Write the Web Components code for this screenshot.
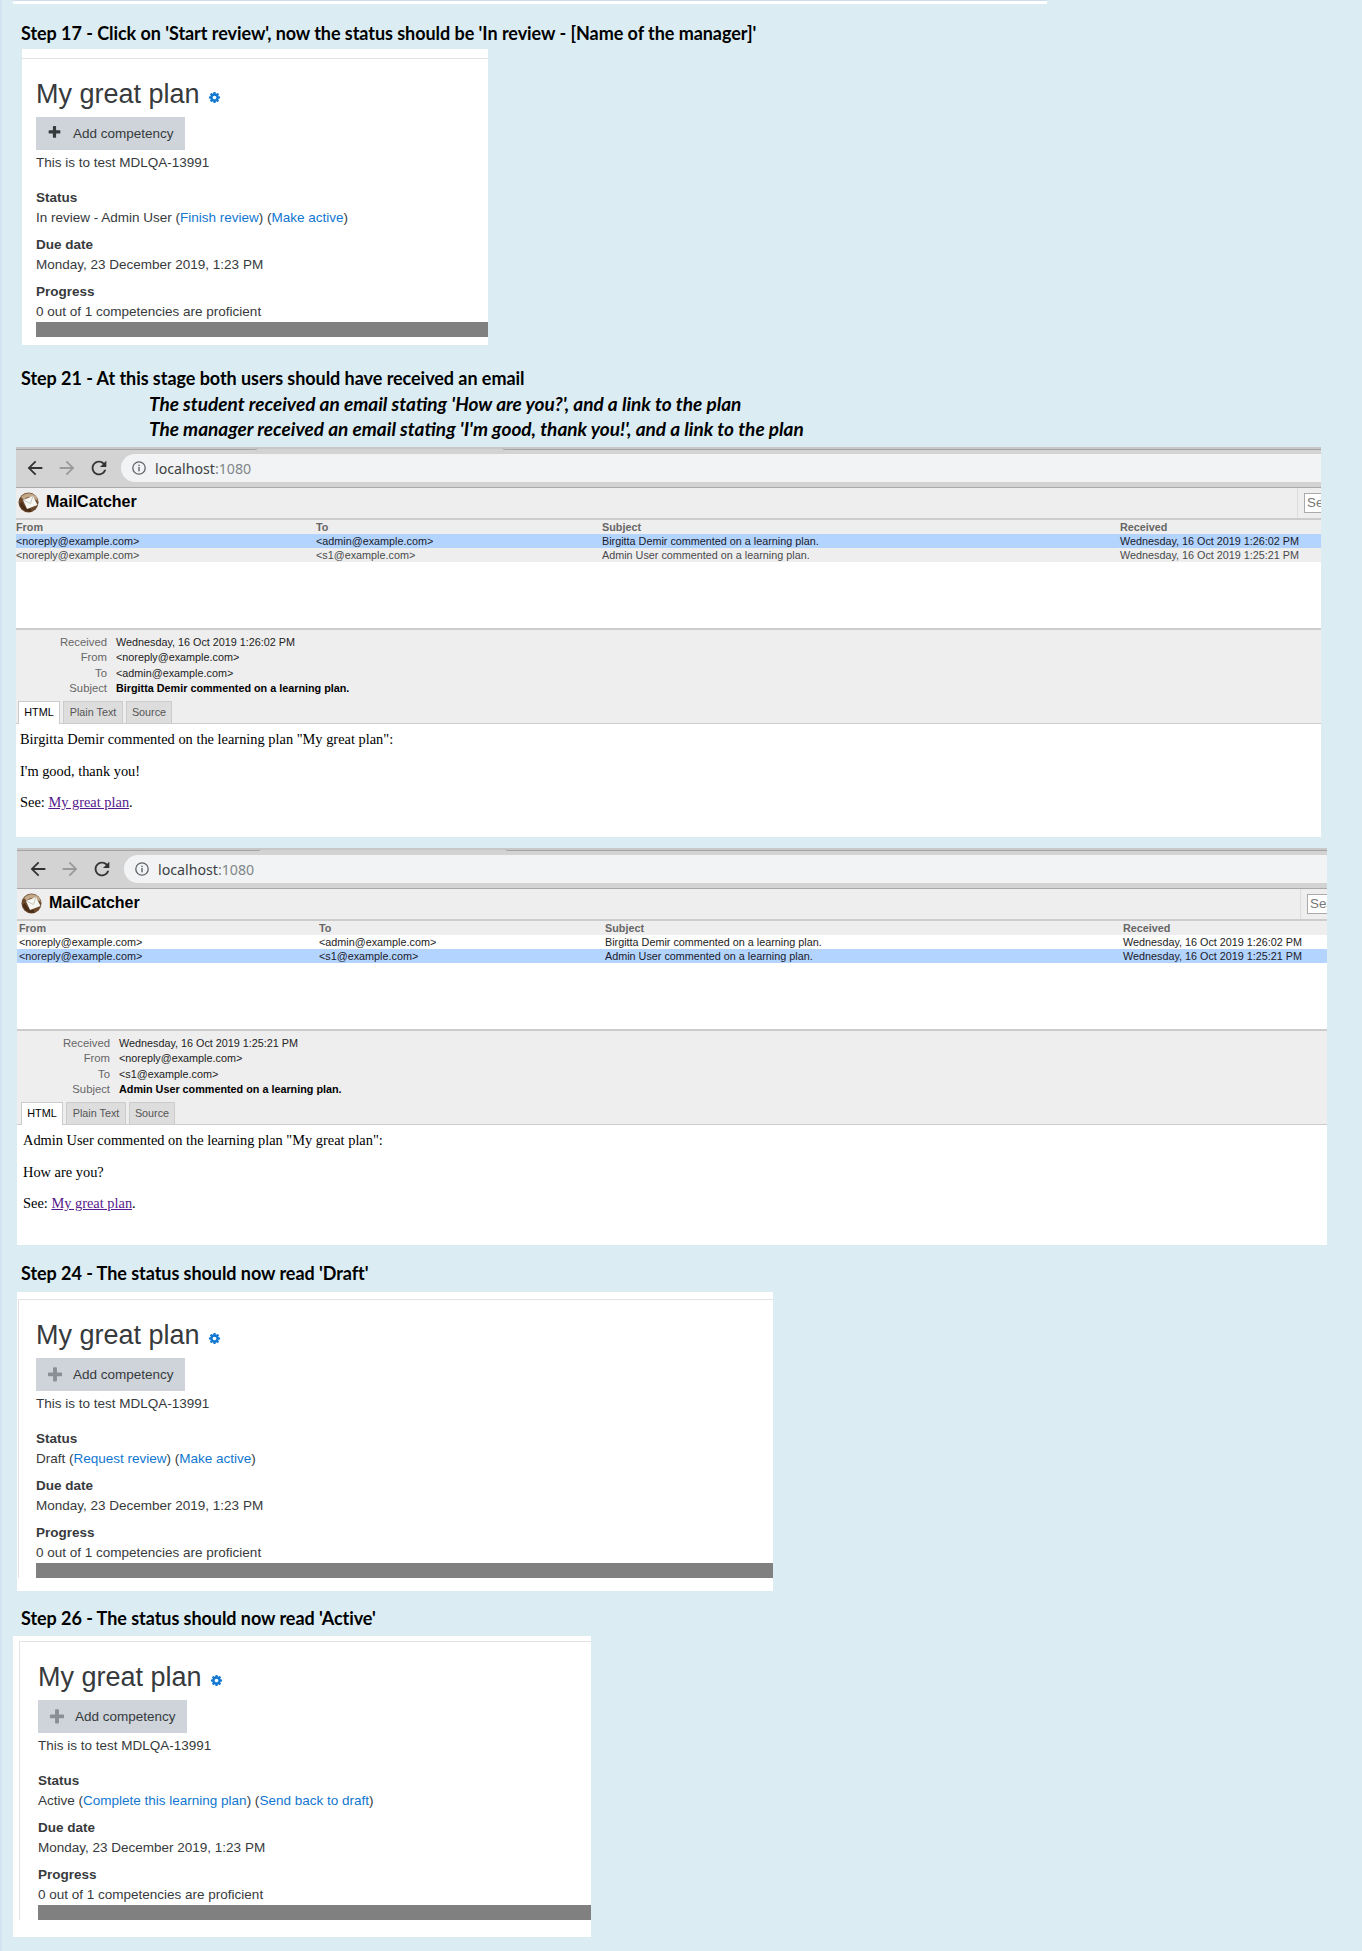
<!DOCTYPE html>
<html lang="en">
<head>
<meta charset="utf-8">
<title>MDLQA-13991</title>
<style>
  html, body { margin: 0; padding: 0; }
  body {
    background: #dbedf3;
    border-left: 2px solid #d5e3f0;
    height: 1951px;
    box-sizing: border-box;
    overflow: hidden;
    font-family: "Liberation Sans", Arial, sans-serif;
  }
  .strip {
    height: 3px;
    width: 1034px;
    margin-left: 11px;
    background: #fff;
    border-top: 1px solid #cfdcec;
  }
</style>
</head>
<body>
<div class="strip"></div>

<step-heading style="margin-top:18px">Step 17 - Click on 'Start review', now the status should be 'In review - [Name of the manager]'</step-heading>
<plan-card style="margin:2px 0 0 20px;width:466px" top="9" inset="14" bottom="8" plus="dark">
  In review - Admin User (<a href="#">Finish review</a>) (<a href="#">Make active</a>)
</plan-card>

<step-heading style="margin-top:22px">Step 21 - At this stage both users should have received an email</step-heading>
<step-heading note>The student received an email stating 'How are you?', and a link to the plan</step-heading>
<step-heading note>The manager received an email stating 'I'm good, thank you!', and a link to the plan</step-heading>

<mail-window style="margin:5px 0 0 14px;width:1305px;height:390px" selected="0" pad="0" search="Se" nav="24"
  received="Wednesday, 16 Oct 2019 1:26:02 PM" to="&lt;admin@example.com&gt;" subject="Birgitta Demir commented on a learning plan.">
  <p>Birgitta Demir commented on the learning plan "My great plan":</p>
  <p>I'm good, thank you!</p>
  <p>See: <a href="#">My great plan</a>.</p>
</mail-window>

<mail-window style="margin:11px 0 0 15px;width:1310px;height:397px" selected="1" pad="2" search="Sea" nav="27"
  received="Wednesday, 16 Oct 2019 1:25:21 PM" to="&lt;s1@example.com&gt;" subject="Admin User commented on a learning plan.">
  <p>Admin User commented on the learning plan "My great plan":</p>
  <p>How are you?</p>
  <p>See: <a href="#">My great plan</a>.</p>
</mail-window>

<step-heading style="margin-top:17px">Step 24 - The status should now read 'Draft'</step-heading>
<plan-card style="margin:5px 0 0 15px;width:756px" top="7" inset="19" edge="1" bottom="13">
  Draft (<a href="#">Request review</a>) (<a href="#">Make active</a>)
</plan-card>

<step-heading style="margin-top:16px">Step 26 - The status should now read 'Active'</step-heading>
<plan-card style="margin:4px 0 0 11px;width:578px" top="5" inset="25" edge="6" bottom="17">
  Active (<a href="#">Complete this learning plan</a>) (<a href="#">Send back to draft</a>)
</plan-card>

<script>
// Section titles of the test script, the "note" ones are the indented italic lines
class StepHeading extends HTMLElement {
    constructor() {
        super();
        this.attachShadow({ mode: 'open' });
        this.shadowRoot.innerHTML = `
            <style>
                :host {
                    display: block;
                    height: 25px;
                    line-height: 23px;
                    padding-left: 19px;
                    font-family: "Lato", "Open Sans", sans-serif;
                    font-weight: 700;
                    font-size: 18px;
                    letter-spacing: -0.05px;
                    color: #000;
                    white-space: nowrap;
                }
                :host([note]) {
                    padding-left: 147px;
                    font-style: italic;
                    font-size: 19px;
                    letter-spacing: 0;
                }
            </style>
            <slot></slot>
        `;
    }
}

// Moodle learning plan block
class PlanCard extends HTMLElement {
    constructor() {
        super();
        this.attachShadow({ mode: 'open' });
    }

    connectedCallback() {
        const top = this.getAttribute('top') || 9;
        const inset = Number(this.getAttribute('inset') || 14);
        const edge = this.getAttribute('edge');
        const bottom = this.getAttribute('bottom') || 8;
        const dark = this.getAttribute('plus') === 'dark';
        const plusColor = dark ? '#373a3c' : '#8a8f94';
        const plusSize = dark ? 15 : 18;
        const frameLeft = edge ? Number(edge) : 0;
        const contentLeft = edge ? inset - frameLeft - 1 : inset;

        this.shadowRoot.innerHTML = `
            <style>
                :host {
                    display: block;
                    background: #fff;
                    box-sizing: border-box;
                    padding-top: ${top}px;
                    padding-bottom: ${bottom}px;
                    font-family: "Liberation Sans", Arial, sans-serif;
                    font-size: 13.5px;
                    line-height: 20px;
                    color: #373a3c;
                }
                .frame {
                    margin-left: ${frameLeft}px;
                    padding-left: ${contentLeft}px;
                    border-top: 1px solid #e3e3e3;
                    ${edge ? 'border-left: 1px solid #e3e3e3;' : ''}
                }
                h2 {
                    margin: 16px 0 0;
                    font-size: 27px;
                    line-height: 38px;
                    font-weight: 400;
                    display: flex;
                    align-items: center;
                }
                h2 svg { margin: 6px 0 0 8px; }
                .add {
                    margin-top: 4px;
                    width: 149px;
                    height: 33px;
                    box-sizing: border-box;
                    background: #ced4da;
                    display: flex;
                    align-items: center;
                    position: relative;
                    padding-left: 37px;
                }
                .add svg { position: absolute; left: ${dark ? 11.4 : 9.6}px; top: 8px; }
                .desc { margin-top: 3px; }
                .label { font-weight: 700; margin-top: 7px; }
                .label.first { margin-top: 15px; }
                ::slotted(a) { color: #1177d1; text-decoration: none; }
                .bar { height: 15px; background: #808080; }
            </style>
            <div class="frame">
                <h2>My great plan
                    <svg width="13" height="13" viewBox="0 0 1792 1792"><path fill="#1177d1" d="M1152 896q0-106-75-181t-181-75-181 75-75 181 75 181 181 75 181-75 75-181zm512-109v222q0 12-8 23t-20 13l-185 28q-19 54-39 91 35 50 107 138 10 12 10 25t-9 23q-27 37-99 108t-94 71q-12 0-26-9l-138-108q-44 23-91 38-16 136-29 186-7 28-36 28h-222q-14 0-24.500-8.500t-11.500-21.500l-28-184q-49-16-90-37l-141 107q-10 9-25 9-14 0-25-11-126-114-165-168-7-10-7-23 0-12 8-23 15-21 51-66.500t54-70.500q-27-50-41-99l-183-27q-13-2-21-12.500t-8-23.500v-222q0-12 8-23t19-13l186-28q14-46 39-92-40-57-107-138-10-12-10-24 0-10 9-23 26-36 98.500-107.500t94.500-71.500q13 0 26 10l138 107q44-23 91-38 16-136 29-186 7-28 36-28h222q14 0 24.500 8.500t11.500 21.500l28 184q49 16 90 37l142-107q9-9 24-9 13 0 25 10 129 119 165 170 7 8 7 22 0 12-8 23-15 21-51 66.500t-54 70.500q26 50 41 98l183 28q13 2 21 12.500t8 23.500z"/></svg>
                </h2>
                <div class="add">
                    <svg width="${plusSize}" height="${plusSize}" viewBox="0 0 1792 1792"><path fill="${plusColor}" d="M1600 736v192q0 40-28 68t-68 28h-416v416q0 40-28 68t-68 28h-192q-40 0-68-28t-28-68v-416h-416q-40 0-68-28t-28-68v-192q0-40 28-68t68-28h416v-416q0-40 28-68t68-28h192q40 0 68 28t28 68v416h416q40 0 68 28t28 68z"/></svg>
                    Add competency
                </div>
                <div class="desc">This is to test MDLQA-13991</div>
                <div class="label first">Status</div>
                <div><slot></slot></div>
                <div class="label">Due date</div>
                <div>Monday, 23 December 2019, 1:23 PM</div>
                <div class="label">Progress</div>
                <div>0 out of 1 competencies are proficient</div>
                <div class="bar"></div>
            </div>
        `;
    }
}

// Chrome toolbar as it was cropped in the screenshots
class BrowserBar extends HTMLElement {
    constructor() {
        super();
        this.attachShadow({ mode: 'open' });
    }

    connectedCallback() {
        const pad = Number(this.getAttribute('pad') || 0);
        this.shadowRoot.innerHTML = `
            <style>
                :host {
                    display: block;
                    height: 40px;
                    background: #d3d3d3;
                    border-bottom: 1px solid #a9a9a9;
                }
                .tabs { display: flex; height: 7px; }
                .tabs div { height: 2px; background: #c8c8c8; border-bottom: 1px solid #a4a4a4; }
                .tabs .l { width: ${242 + pad}px; border-bottom-right-radius: 3px; }
                .tabs .gap { width: 244px; border-bottom: 0; }
                .tabs .r { flex: 1; border-bottom-left-radius: 3px; }
                .row { display: flex; align-items: center; height: 28px; }
                .btns { width: ${105 + pad}px; position: relative; height: 28px; flex: none; }
                .btns svg { position: absolute; top: 3px; }
                .pill {
                    flex: 1;
                    height: 28px;
                    background: #f1f3f4;
                    border-radius: 14px 0 0 14px;
                    display: flex;
                    align-items: center;
                    padding-left: 11px;
                    font-family: "Noto Sans", "Open Sans", sans-serif;
                    font-size: 14.2px;
                    color: #3c4043;
                }
                .pill svg { margin-right: 9px; }
                .pill span { color: #80868b; }
            </style>
            <div class="tabs"><div class="l"></div><div class="gap"></div><div class="r"></div></div>
            <div class="row">
                <div class="btns">
                    <svg style="left:${8.3 + pad}px" width="22" height="22" viewBox="0 0 24 24"><path fill="#333" d="M20 11H7.830l5.590-5.590L12 4l-8 8 8 8 1.410-1.410L7.830 13H20v-2z"/></svg>
                    <svg style="left:${40.3 + pad}px" width="22" height="22" viewBox="0 0 24 24"><path fill="#9a9a9a" d="M4 11h12.170l-5.590-5.590L12 4l8 8-8 8-1.410-1.410L16.170 13H4v-2z"/></svg>
                    <svg style="left:${72.3 + pad}px" width="22" height="22" viewBox="0 0 24 24"><path fill="#333" d="M17.650 6.350C16.200 4.900 14.210 4 12 4c-4.420 0-7.990 3.580-7.990 8s3.570 8 7.990 8c3.730 0 6.840-2.550 7.730-6h-2.080c-.82 2.330-3.040 4-5.650 4-3.310 0-6-2.690-6-6s2.690-6 6-6c1.660 0 3.140.69 4.220 1.780L13 11h7V4l-2.350 2.350z"/></svg>
                </div>
                <div class="pill">
                    <svg width="14" height="14" viewBox="0 0 14 14"><circle cx="7" cy="7" r="6.200" fill="none" stroke="#5f6368" stroke-width="1.300"/><rect x="6.300" y="6" width="1.400" height="4.300" fill="#5f6368"/><rect x="6.300" y="3.700" width="1.400" height="1.400" fill="#5f6368"/></svg>
                    localhost<span>:1080</span>
                </div>
            </div>
        `;
    }
}

// One MailCatcher window: message list, headers and the HTML part of the message
class MailWindow extends HTMLElement {
    constructor() {
        super();
        this.attachShadow({ mode: 'open' });
    }

    row(from, to, subject, received, cls) {
        return `<div class="cols ${cls}"><span>${from}</span><span>${to}</span><span>${subject}</span><span>${received}</span></div>`;
    }

    connectedCallback() {
        const selected = this.getAttribute('selected');
        const pad = this.getAttribute('pad') || 0;
        const nav = this.getAttribute('nav') || 24;
        const esc = (s) => s.replace(/</g, '&lt;').replace(/>/g, '&gt;');
        const from = '&lt;noreply@example.com&gt;';

        this.shadowRoot.innerHTML = `
            <style>
                :host {
                    display: block;
                    background: #fff;
                    overflow: hidden;
                    font-family: "Liberation Sans", Arial, sans-serif;
                    font-size: 10.8px;
                    color: #000;
                }
                header {
                    height: 30px;
                    background: #eee;
                    border-bottom: 2px solid #ccc;
                    display: flex;
                    align-items: center;
                    padding-left: ${pad}px;
                }
                header svg { margin: -2px 6px 0 2px; flex: none; }
                h1 { margin: -2px 0 0; font-size: 16px; font-weight: 700; line-height: 30px; }
                nav {
                    margin-left: auto;
                    width: ${nav}px;
                    height: 30px;
                    box-sizing: border-box;
                    border-left: 1px solid #ddd;
                    padding: 5px 0 0 6px;
                    overflow: hidden;
                    flex: none;
                }
                nav span {
                    display: block;
                    height: 20px;
                    width: 60px;
                    box-sizing: border-box;
                    border: 1px solid #aaa;
                    background: #fff;
                    color: #777;
                    font-size: 13.33px;
                    line-height: 18px;
                    padding-left: 2px;
                }
                .cols {
                    display: grid;
                    grid-template-columns: 300px 286px 518px 1fr;
                    height: 14px;
                    line-height: 14px;
                    padding-left: ${pad}px;
                    color: #4a4a4a;
                    white-space: nowrap;
                }
                .head { background: #eee; color: #666; font-weight: 700; }
                .sel { background: #b3d4ff; color: #1a1a2a; }
                .even { background: #eee; }
                .plain { background: #fff; color: #222; }
                .list { height: 108px; border-bottom: 2px solid #ccc; }
                .detail {
                    height: 94px;
                    background: #eee;
                    border-bottom: 1px solid #ccc;
                    box-sizing: border-box;
                    padding: 4.500px 0 0 ${pad}px;
                }
                dl {
                    margin: 0;
                    display: grid;
                    grid-template-columns: 91px 1fr;
                    column-gap: 9px;
                    grid-auto-rows: 15.500px;
                    line-height: 15.500px;
                }
                dt { text-align: right; color: #666; font-size: 11.300px; }
                dd { margin: 0; color: #222; }
                dd.subj { font-weight: 700; color: #000; }
                .tabs {
                    display: flex;
                    gap: 3px;
                    margin: 4.500px 0 0 2px;
                    height: 23px;
                }
                .tabs div {
                    box-sizing: border-box;
                    height: 22px;
                    line-height: 20px;
                    text-align: center;
                    background: #ddd;
                    border: 1px solid #ccc;
                    border-bottom: 0;
                    color: #555;
                }
                .tabs .on { background: #fff; height: 23px; color: #000; }
                .body { padding: 7px 0 0 ${4 + Number(pad)}px; font-family: "Liberation Serif", "Times New Roman", serif; font-size: 14.4px; color: #000; }
                ::slotted(p) { margin: 0 0 15.500px !important; line-height: 16px; }
            </style>
            <browser-bar pad="${pad}"></browser-bar>
            <header>
                <svg width="22" height="21" viewBox="0 0 22 21">
                    <ellipse cx="10.500" cy="10.500" rx="10" ry="10" fill="#6b4a2e"/>
                    <path d="M3 5 Q10 -2 18 4 L20 9 L15 6 Q9 3 6 8 Z" fill="#c3a888"/>
                    <path d="M1.500 12 Q4 20 13 20 L13 17 Q7 17 4 10 Z" fill="#4a2e18"/>
                    <path d="M5 8 L15 4 L19.500 13 L9 17 Z" fill="#f7f7f4"/>
                    <path d="M5 8 L12.500 11.500 L15 4" fill="none" stroke="#bdbdb5" stroke-width=".8"/>
                </svg>
                <h1>MailCatcher</h1>
                <nav><span>${this.getAttribute('search')}</span></nav>
            </header>
            <div class="list">
                ${this.row('From', 'To', 'Subject', 'Received', 'head')}
                ${this.row(from, '&lt;admin@example.com&gt;', 'Birgitta Demir commented on a learning plan.', 'Wednesday, 16 Oct 2019 1:26:02 PM', selected === '0' ? 'sel' : 'plain')}
                ${this.row(from, '&lt;s1@example.com&gt;', 'Admin User commented on a learning plan.', 'Wednesday, 16 Oct 2019 1:25:21 PM', selected === '1' ? 'sel' : 'even')}
            </div>
            <div class="detail">
                <dl>
                    <dt>Received</dt><dd>${this.getAttribute('received')}</dd>
                    <dt>From</dt><dd>${from}</dd>
                    <dt>To</dt><dd>${esc(this.getAttribute('to'))}</dd>
                    <dt>Subject</dt><dd class="subj">${this.getAttribute('subject')}</dd>
                </dl>
                <div class="tabs"><div class="on" style="width:42px">HTML</div><div style="width:60px">Plain Text</div><div style="width:46px">Source</div></div>
            </div>
            <div class="body"><slot></slot></div>
        `;
    }
}

customElements.define('step-heading', StepHeading);
customElements.define('plan-card', PlanCard);
customElements.define('browser-bar', BrowserBar);
customElements.define('mail-window', MailWindow);
</script>
<style>
  mail-window a { color: #551a8b; text-decoration: underline; }
</style>
</body>
</html>
